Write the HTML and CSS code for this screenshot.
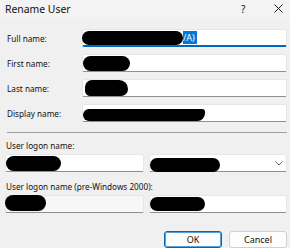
FILE: index.html
```html
<!DOCTYPE html>
<html lang="en">
<head>
    <meta charset="UTF-8">
    <title>Rename User</title>
    <link rel="stylesheet" href="styles.css">
</head>
<body>
    <div class="dialog">
        <div class="titlebar">
            <span class="title">Rename User</span>
            <span class="help">?</span>
            <svg class="close" width="9" height="9" viewBox="0 0 9 9">
                <path d="M0.5 0.5 L8.5 8.5 M8.5 0.5 L0.5 8.5" stroke="#1a1a1a" stroke-width="1"/>
            </svg>
        </div>

        <div class="names">
            <div class="row">
                <label>Full name:</label>
                <div class="field focused">
                    <span class="blot blot-full"></span><span class="selected">/A)</span>
                </div>
            </div>
            <div class="row">
                <label>First name:</label>
                <div class="field"><span class="blot blot-first"></span></div>
            </div>
            <div class="row">
                <label>Last name:</label>
                <div class="field"><span class="blot blot-last"></span></div>
            </div>
            <div class="row">
                <label>Display name:</label>
                <div class="field"><span class="blot blot-display"></span></div>
            </div>
        </div>

        <hr class="separator">

        <div class="logon">
            <label>User logon name:</label>
            <div class="pair">
                <div class="field"><span class="blot blot-logon"></span></div>
                <div class="field combo">
                    <span class="blot blot-domain"></span>
                    <svg class="chevron" width="8" height="5" viewBox="0 0 8 5">
                        <path d="M0.5 0.5 L4 4 L7.5 0.5" fill="none" stroke="#666" stroke-width="1"/>
                    </svg>
                </div>
            </div>
            <label>User logon name (pre-Windows 2000):</label>
            <div class="pair">
                <div class="field readonly"><span class="blot blot-pre"></span></div>
                <div class="field"><span class="blot blot-sam"></span></div>
            </div>
        </div>

        <div class="buttons">
            <button class="btn default">OK</button>
            <button class="btn">Cancel</button>
        </div>
    </div>
</body>
</html>
```

FILE: styles.css
```css
body, html {
    margin: 0;
    width: 290px;
    height: 248px;
    overflow: hidden;
    background-color: #f0f0f0;
    font-family: "Noto Sans", sans-serif;
    font-size: 8.2px;
    color: #111;
}
.dialog {
    display: flex;
    flex-direction: column;
    height: 248px;
}
.titlebar {
    height: 17px;
    padding-bottom: 2px;
    display: flex;
    align-items: center;
    padding-left: 5px;
    background-color: #f3f3f3;
    font-size: 10.4px;
}
.title {
    flex: 1;
}
.help {
    width: 10px;
    margin-right: 23px;
    font-size: 10px;
}
.close {
    margin-right: 7px;
}
.names {
    display: flex;
    flex-direction: column;
    gap: 7px;
    padding: 10px 3px 0 7px;
}
.row {
    display: flex;
    align-items: center;
    height: 18px;
}
.row label {
    width: 75px;
}
.field {
    flex: 1;
    height: 18px;
    box-sizing: border-box;
    background-color: #fff;
    border: 1px solid #e6e6e6;
    border-bottom-color: #8f8f8f;
    border-radius: 2px;
    display: flex;
    align-items: center;
}
.field.focused {
    border-bottom: 2px solid #0067c0;
}
.field.readonly {
    background-color: #f7f7f7;
}
.blot {
    display: block;
    background-color: #000;
    border-radius: 8px;
    height: 14px;
}
.blot-full { width: 101px; margin-left: -1px; }
.blot-first { width: 47px; height: 15px; }
.blot-last { width: 43px; height: 16px; margin-left: 2px; border-radius: 8px 10px 8px 6px; }
.blot-display { width: 122px; height: 12px; margin-top: 4px; border-radius: 8px 4px 10px 8px; }
.blot-logon { width: 55px; height: 15px; }
.blot-domain { width: 70px; height: 14px; margin-top: 3px; }
.blot-pre { width: 41px; height: 16px; margin-left: -1px; margin-top: -2px; }
.blot-sam { width: 55px; height: 14px; }
.selected {
    background-color: #0078d7;
    color: #fff;
    padding: 0 2px 0 0;
    line-height: 13px;
    font-size: 9px;
}
.separator {
    margin: 10px 3px 0 7px;
    border: 0;
    border-top: 1px solid #a0a0a0;
}
.logon {
    display: flex;
    flex-direction: column;
    padding: 6px 3px 0 5px;
}
.logon label {
    padding-left: 1px;
    height: 14px;
    line-height: 14px;
    margin-bottom: 1px;
}
.pair {
    display: flex;
    gap: 5px;
    margin-bottom: 8px;
}
.combo {
    justify-content: space-between;
}
.chevron {
    margin-right: 3px;
}
.buttons {
    display: flex;
    justify-content: flex-end;
    gap: 7px;
    padding: 10px 3px 0 0;
}
.btn {
    width: 58px;
    height: 17px;
    font-family: "Noto Sans", sans-serif;
    font-size: 9px;
    color: #111;
    background-color: #fdfdfd;
    border: 1px solid #d0d0d0;
    border-radius: 3px;
    padding: 0;
}
.btn.default {
    border: 1px solid #0067c0;
    box-shadow: inset 0 0 0 1px #5c9fd8;
}
```
